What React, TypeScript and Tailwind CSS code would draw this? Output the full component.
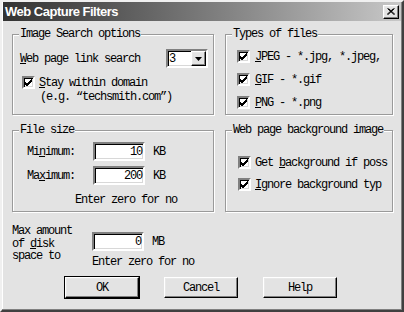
const mono = "font-['Liberation_Mono',monospace] text-[12px] tracking-[-1.2px] text-black";
const sunken =
  "border-2 border-t-[#808080] border-l-[#808080] border-b-white border-r-white shadow-[inset_1px_1px_0_#000,inset_-1px_-1px_0_#d8d8d8] bg-white";
const raised =
  "border border-t-white border-l-white border-r-black border-b-black shadow-[inset_-1px_-1px_0_#808080,inset_1px_1px_0_#e8e8e8] bg-[#e3e3e3]";

function Check() {
  return (
    <div className={`w-[13px] h-[13px] shrink-0 flex items-center justify-center ${sunken}`}>
      <svg width="9" height="9" viewBox="0 0 9 9">
        <path d="M1 4 L3 6 L8 1 M1 5 L3 7 L8 2 M1 6 L3 8 L8 3" stroke="#000" strokeWidth="1" fill="none" />
      </svg>
    </div>
  );
}

function Group({ label, className, children }: { label: string; className?: string; children: React.ReactNode }) {
  return (
    <div
      className={`relative border border-[#9a9a9a] shadow-[inset_1px_1px_0_#fff,1px_1px_0_#fff] ${className ?? ""}`}
    >
      <span className={`absolute -top-[8px] left-[6px] px-[1px] leading-[14px] bg-[#e3e3e3] ${mono}`}>{label}</span>
      {children}
    </div>
  );
}

function NumBox({ value }: { value: string }) {
  return (
    <div className={`w-[52px] h-[19px] flex items-center justify-end pr-[1px] ${sunken} ${mono}`}>{value}</div>
  );
}

function Btn({ label, def }: { label: string; def?: boolean }) {
  return (
    <div className={`w-[74px] h-[21px] ${def ? "outline outline-1 outline-black" : ""}`}>
      <div className={`w-full h-full flex items-center justify-center ${raised} ${mono}`}>{label}</div>
    </div>
  );
}

export default function App() {
  return (
    <div className="w-[404px] h-[312px] bg-[#e3e3e3] border-2 border-t-[#f0f0f0] border-l-[#f0f0f0] border-r-[#404040] border-b-[#404040] shadow-[inset_-1px_-1px_0_#808080,inset_1px_1px_0_#fff] overflow-hidden">
      {/* Title bar */}
      <div className="mx-[1px] h-[19px] flex items-center bg-linear-to-r from-[#333333] to-[#c8c8c8]">
        <span className="pl-[2px] font-['Liberation_Sans',sans-serif] text-[13px] font-bold tracking-[-0.5px] text-white">
          Web Capture Filters
        </span>
        <div className={`ml-auto mr-[2px] w-[16px] h-[14px] flex items-center justify-center ${raised}`}>
          <svg width="8" height="7" viewBox="0 0 8 7">
            <path d="M0.5 0.5 L7 6.5 M1.5 0.5 L8 6.5 M6.5 0.5 L0 6.5 M7.5 0.5 L1 6.5" stroke="#000" strokeWidth="1" />
          </svg>
        </div>
      </div>

      <div className="px-[10px]">
        <div className="mt-[13px] grid grid-cols-[202px_168px] grid-rows-[81px_82px] gap-x-[11px] gap-y-[15px]">
          <Group label="Image Search options" className="pt-[14px] pl-[7px] pr-[5px]">
            <div className="h-[19px] flex items-center">
              <span className={mono}>
                <u>W</u>eb page link search
              </span>
              <div className={`ml-auto w-[42px] h-[19px] flex items-center ${sunken}`}>
                <span className={`pl-[1px] ${mono}`}>3</span>
                <div className={`ml-auto w-[15px] h-[15px] flex items-center justify-center ${raised}`}>
                  <svg width="7" height="4" viewBox="0 0 7 4">
                    <path d="M0 0 H7 L3.5 4 Z" fill="#000" />
                  </svg>
                </div>
              </div>
            </div>
            <div className="mt-[8px] ml-[2px] h-[13px] flex items-center gap-[4px]">
              <Check />
              <span className={mono}>
                <u>S</u>tay within domain
              </span>
            </div>
            <div className={`mt-[2px] ml-[20px] h-[12px] leading-[12px] ${mono}`}>(e.g. “techsmith.com”)</div>
          </Group>

          <Group label="Types of files" className="pt-[15px] pl-[11px] flex flex-col gap-[10px] overflow-visible">
            <div className="h-[13px] flex items-center gap-[5px]">
              <Check />
              <span className={`whitespace-nowrap ${mono}`}>
                <u>J</u>PEG - *.jpg, *.jpeg,
              </span>
            </div>
            <div className="h-[13px] flex items-center gap-[5px]">
              <Check />
              <span className={mono}>
                <u>G</u>IF - *.gif
              </span>
            </div>
            <div className="h-[13px] flex items-center gap-[5px]">
              <Check />
              <span className={mono}>
                <u>P</u>NG - *.png
              </span>
            </div>
          </Group>

          <Group label="File size" className="pt-[11px] pl-[14px]">
            <div className="h-[19px] flex items-center">
              <span className={`w-[66px] ${mono}`}>
                Mi<u>n</u>imum:
              </span>
              <NumBox value="10" />
              <span className={`ml-[8px] ${mono}`}>KB</span>
            </div>
            <div className="mt-[5px] h-[19px] flex items-center">
              <span className={`w-[66px] ${mono}`}>
                Ma<u>x</u>imum:
              </span>
              <NumBox value="200" />
              <span className={`ml-[8px] ${mono}`}>KB</span>
            </div>
            <div className={`mt-[9px] ml-[48px] h-[12px] leading-[12px] ${mono}`}>Enter zero for no</div>
          </Group>

          <Group label="Web page background image" className="pt-[25px] pl-[12px] flex flex-col gap-[9px]">
            <div className="h-[13px] flex items-center gap-[4px]">
              <Check />
              <span className={`whitespace-nowrap ${mono}`}>
                Get <u>b</u>ackground if poss
              </span>
            </div>
            <div className="h-[13px] flex items-center gap-[4px]">
              <Check />
              <span className={`whitespace-nowrap ${mono}`}>
                <u>I</u>gnore background typ
              </span>
            </div>
          </Group>
        </div>

        <div className="mt-[13px] flex items-start">
          <div className={`w-[80px] leading-[12.5px] ${mono}`}>
            <div>Max amount</div>
            <div>
              of <u>d</u>isk
            </div>
            <div>space to</div>
          </div>
          <div className="mt-[7px]">
            <div className="h-[19px] flex items-center">
              <NumBox value="0" />
              <span className={`ml-[8px] ${mono}`}>MB</span>
            </div>
            <div className={`mt-[5px] h-[12px] leading-[12px] ${mono}`}>Enter zero for no</div>
          </div>
        </div>

        <div className="mt-[9px] ml-[53px] flex gap-[25px]">
          <Btn label="OK" def />
          <Btn label="Cancel" />
          <Btn label="Help" />
        </div>
      </div>
    </div>
  );
}
